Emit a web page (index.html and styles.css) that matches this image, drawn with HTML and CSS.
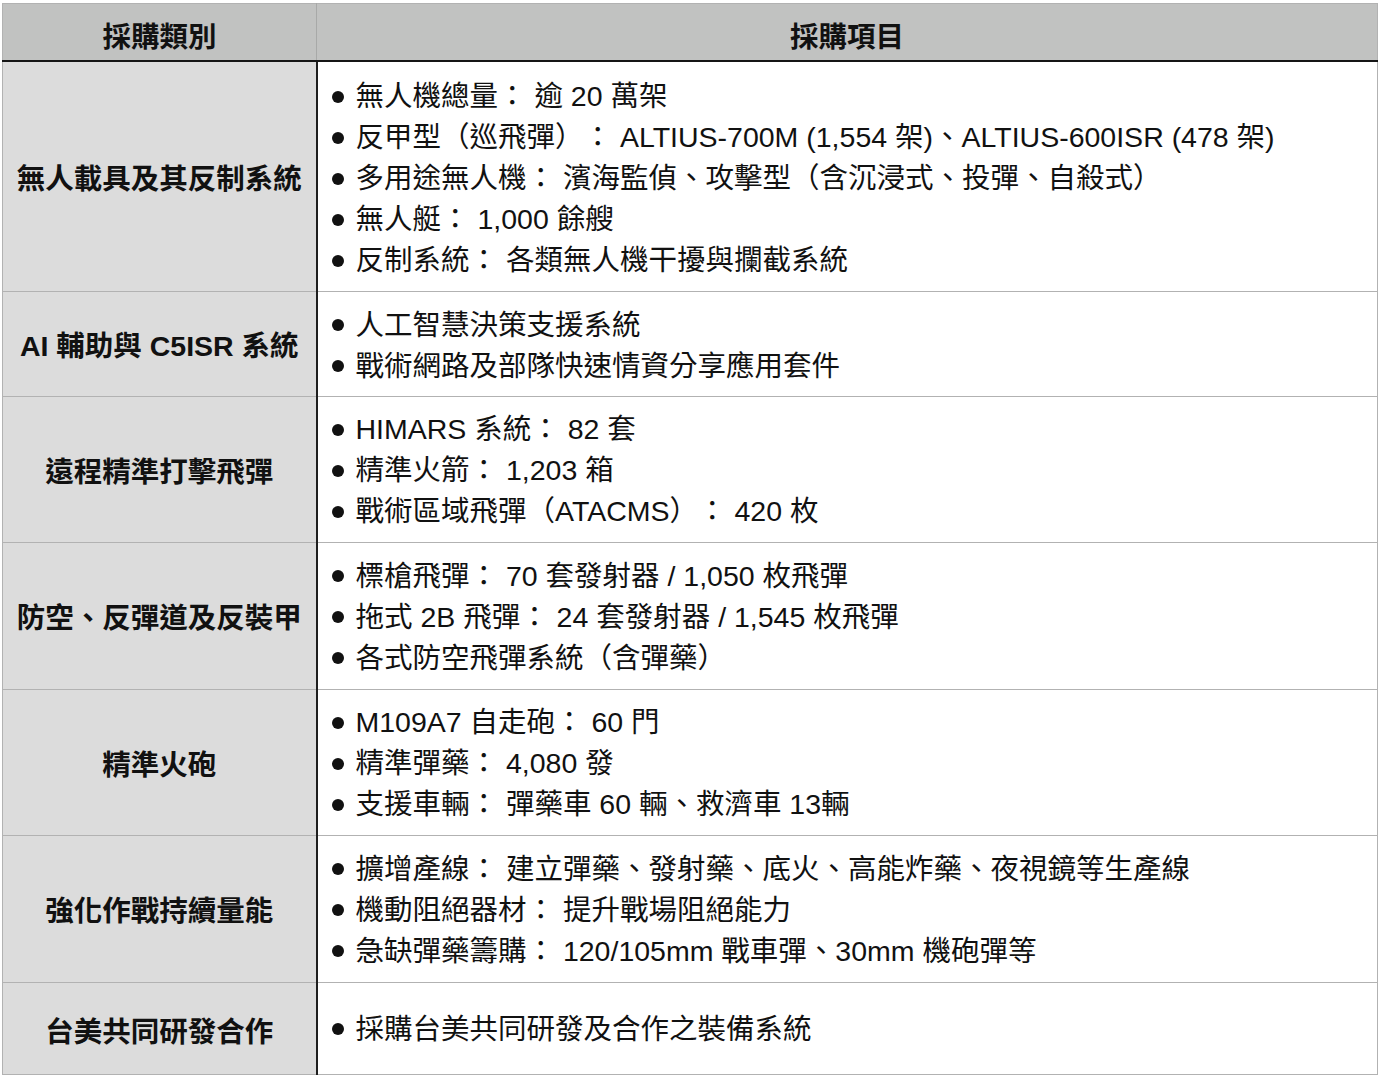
FILE: index.html
```html
<!DOCTYPE html>
<html lang="zh-Hant">
<head>
<meta charset="utf-8">
<title>採購項目</title>
<link rel="stylesheet" href="styles.css">
</head>
<body>
<table class="proc">
  <thead>
    <tr>
      <th class="h-cat">採購類別</th>
      <th class="h-item">採購項目</th>
    </tr>
  </thead>
  <tbody>
    <tr class="r5">
      <td class="cat">無人載具及其反制系統</td>
      <td class="items"><ul>
        <li>無人機總量： 逾 20 萬架</li>
        <li>反甲型（巡飛彈）： ALTIUS-700M (1,554 架)、ALTIUS-600ISR (478 架)</li>
        <li>多用途無人機： 濱海監偵、攻擊型（含沉浸式、投彈、自殺式）</li>
        <li>無人艇： 1,000 餘艘</li>
        <li>反制系統： 各類無人機干擾與攔截系統</li>
      </ul></td>
    </tr>
    <tr class="r2">
      <td class="cat">AI 輔助與 C5ISR 系統</td>
      <td class="items"><ul>
        <li>人工智慧決策支援系統</li>
        <li>戰術網路及部隊快速情資分享應用套件</li>
      </ul></td>
    </tr>
    <tr>
      <td class="cat">遠程精準打擊飛彈</td>
      <td class="items"><ul>
        <li>HIMARS 系統： 82 套</li>
        <li>精準火箭： 1,203 箱</li>
        <li>戰術區域飛彈（ATACMS）： 420 枚</li>
      </ul></td>
    </tr>
    <tr>
      <td class="cat">防空、反彈道及反裝甲</td>
      <td class="items"><ul>
        <li>標槍飛彈： 70 套發射器 / 1,050 枚飛彈</li>
        <li>拖式 2B 飛彈： 24 套發射器 / 1,545 枚飛彈</li>
        <li>各式防空飛彈系統（含彈藥）</li>
      </ul></td>
    </tr>
    <tr>
      <td class="cat">精準火砲</td>
      <td class="items"><ul>
        <li>M109A7 自走砲： 60 門</li>
        <li>精準彈藥： 4,080 發</li>
        <li>支援車輛： 彈藥車 60 輛、救濟車 13輛</li>
      </ul></td>
    </tr>
    <tr>
      <td class="cat">強化作戰持續量能</td>
      <td class="items"><ul>
        <li>擴增產線： 建立彈藥、發射藥、底火、高能炸藥、夜視鏡等生產線</li>
        <li>機動阻絕器材： 提升戰場阻絕能力</li>
        <li>急缺彈藥籌購： 120/105mm 戰車彈、30mm 機砲彈等</li>
      </ul></td>
    </tr>
    <tr class="last">
      <td class="cat">台美共同研發合作</td>
      <td class="items"><ul>
        <li>採購台美共同研發及合作之裝備系統</li>
      </ul></td>
    </tr>
  </tbody>
</table>
</body>
</html>
```
FILE: styles.css
```css
html, body {
  margin: 0;
  padding: 0;
  background: #ffffff;
}
body {
  padding: 3px 3px 0 2px;
  font-family: "Liberation Sans", "Noto Sans CJK TC", sans-serif;
  color: #111111;
  text-spacing-trim: space-all;
}
.proc {
  width: 1376px;
  border-collapse: collapse;
  table-layout: fixed;
  border: 1px solid #b2b2b2;
}
.proc th {
  background: #c1c2c1;
  height: 51px;
  padding: 5px 0 0 0;
  font-size: 28.5px;
  font-weight: bold;
  text-align: center;
  vertical-align: middle;
  border-bottom: 2px solid #151515;
  border-top: 1px solid #b2b2b2;
}
.h-cat {
  width: 313px;
  border-right: 1px solid #a8a9a8;
}
.proc td {
  border-top: 1px solid #b2b2b2;
  border-bottom: 1px solid #b2b2b2;
  padding: 0;
  vertical-align: middle;
}
.cat {
  background: #dcdcdc;
  font-size: 28.5px;
  font-weight: bold;
  text-align: center;
  border-right: 2px solid #1e1e1e;
}
.items {
  background: #ffffff;
  font-size: 28.5px;
  padding: 12.75px 0 9.75px 14px !important;
}
.items ul {
  list-style: none;
  margin: 0;
  padding: 0;
}
.items li {
  line-height: 41px;
  display: flex;
  align-items: center;
  white-space: nowrap;
}
.items li::before {
  content: "";
  width: 12px;
  height: 12px;
  border-radius: 50%;
  background: #111111;
  margin-right: 12px;
  flex: none;
}
.r5 .items {
  padding: 14px 0 10px 14px !important;
}
.r2 .items {
  padding: 12.5px 0 9px 14px !important;
}
.last td {
  height: 89px;
  padding-top: 2px !important;
  padding-bottom: 0 !important;
}
```
